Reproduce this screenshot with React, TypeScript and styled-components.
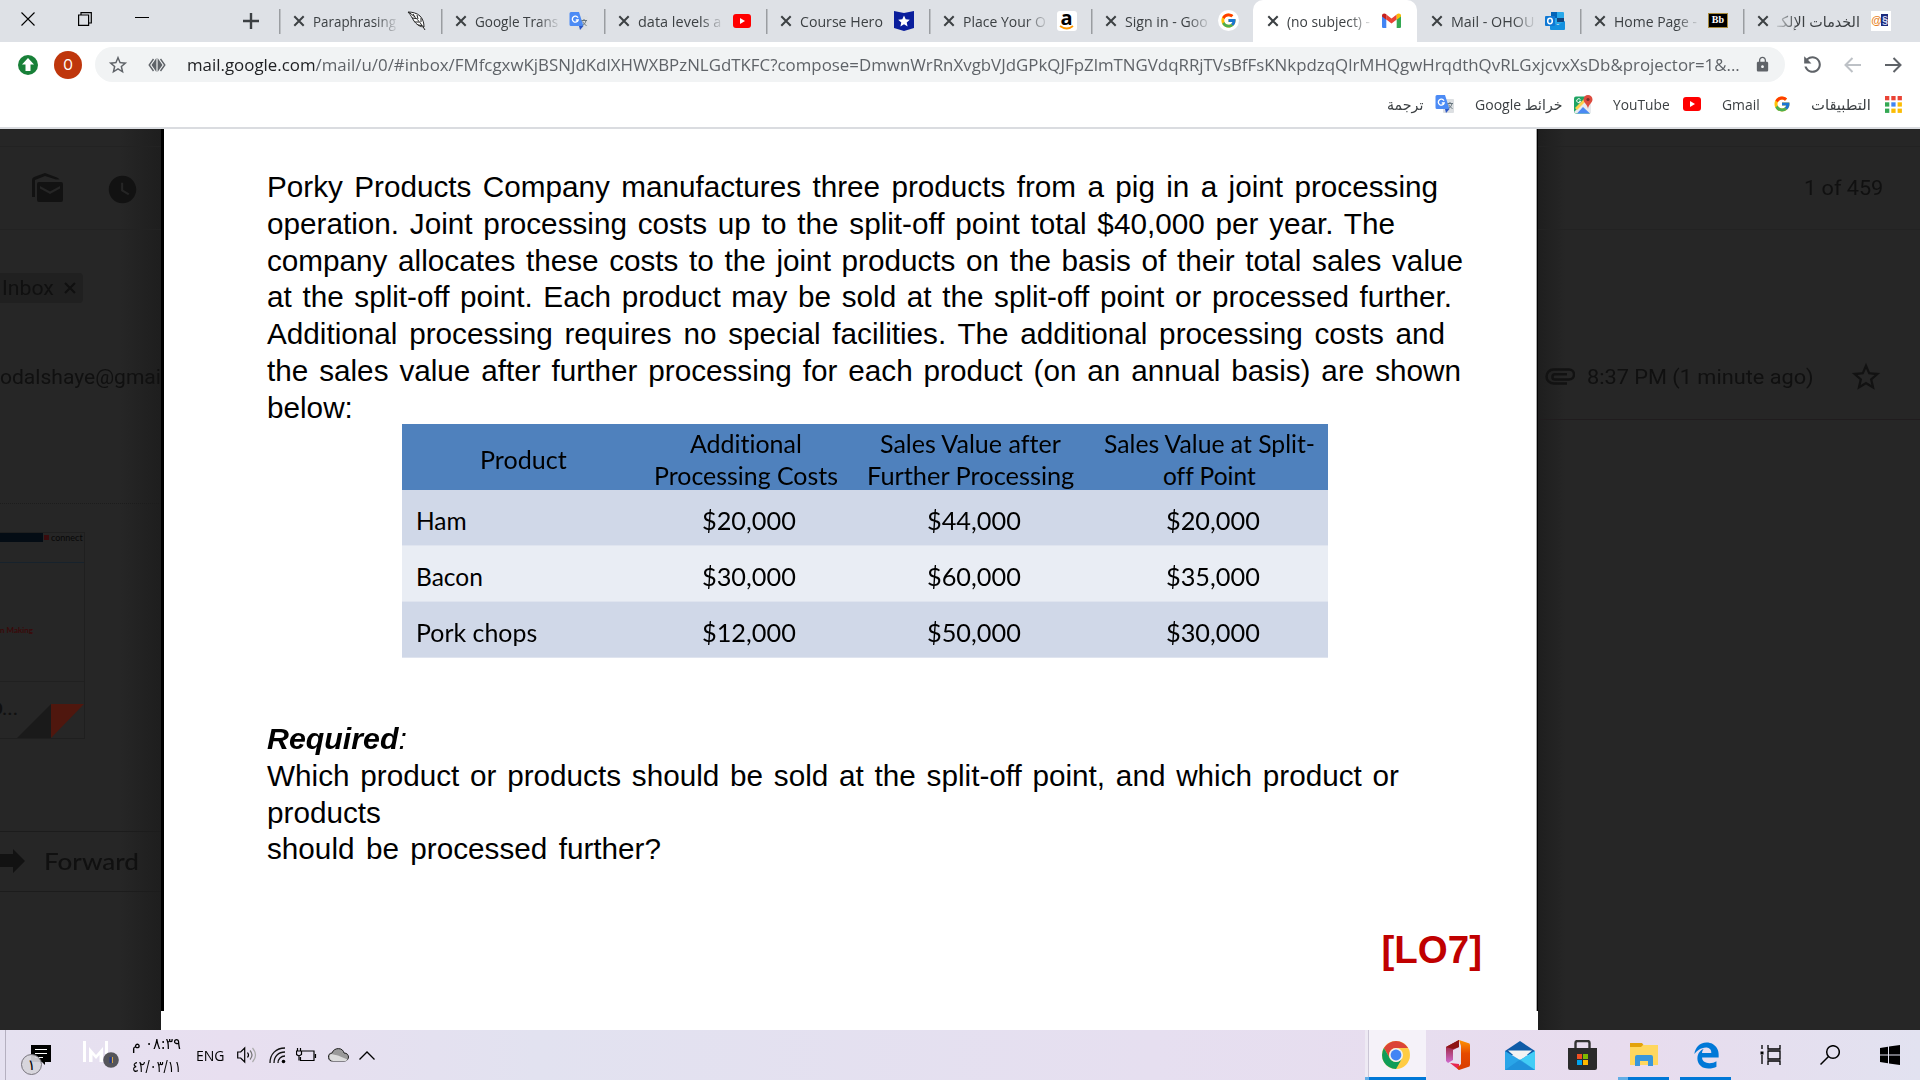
import React, { useLayoutEffect, useRef, useState } from "react";
import styled, { createGlobalStyle } from "styled-components";
import { FaEdgeLegacy } from "react-icons/fa6";
import { FcGoogle } from "react-icons/fc";
import { MdLock, MdRefresh, MdStarBorder, MdWatchLater } from "react-icons/md";

const UI_FONT = `"Open Sans", "Noto Sans", "DejaVu Sans", sans-serif`;
const SLIDE_FONT = `"Liberation Sans", Arial, sans-serif`;
const TABLE_FONT = `Lato, Carlito, sans-serif`;

const GlobalStyle = createGlobalStyle`
  * { box-sizing: border-box; }
  body {
    margin: 0;
    overflow: hidden;
    font-family: ${UI_FONT};
  }
  svg { display: block; flex: none; }
`;

// Squeezes or stretches a single line of text to a known width
const FitText: React.FC<{ width: number; children: React.ReactNode; rtl?: boolean }> = (props) => {
  const { width, children, rtl } = props;
  const ref = useRef<HTMLSpanElement>(null);
  const [scale, setScale] = useState(1);

  useLayoutEffect(() => {
    if (ref.current) setScale(width / ref.current.offsetWidth);
  }, [width]);

  return (
    <FitBox style={{ width }}>
      <FitInner ref={ref} dir={rtl ? "rtl" : "ltr"} style={{ transform: `scaleX(${scale})` }}>
        {children}
      </FitInner>
    </FitBox>
  );
};

// Spreads the slack of a slide line over its word gaps
const SlideLine: React.FC<{ width: number; text: string }> = (props) => {
  const { width, text } = props;
  const ref = useRef<HTMLSpanElement>(null);
  const [spacing, setSpacing] = useState(0);

  useLayoutEffect(() => {
    const gaps = text.split(" ").length - 1;
    if (ref.current && gaps > 0) setSpacing((width - ref.current.getBoundingClientRect().width) / gaps);
  }, [width, text]);

  return (
    <Line>
      <LineText ref={ref} style={{ wordSpacing: spacing }}>
        {text}
      </LineText>
    </Line>
  );
};

/* ---------- icons ---------- */

const CloseIcon = () => (
  <svg width="12" height="12" viewBox="0 0 12 12" stroke="#3c4043" strokeWidth="2">
    <path d="M1.3 1.3 10.7 10.7M10.7 1.3 1.3 10.7" />
  </svg>
);

const FeatherIcon = () => (
  <svg width="20" height="20" viewBox="0 0 20 20" fill="#fff" stroke="#222" strokeWidth="1">
    <path d="M1 1c4 0 9 1 12 4 3 3 4 7 4 11-4 0-8-3-10-6C5 7 4 4 1 1z" />
    <path d="M2 1.500c6 4 11 9 16 17.500M6 3l2 3M10 4l1 4M14 7l0 4M5 7l4 .5M8 11l4 0M11 14l4 .5" />
  </svg>
);

const TranslateIcon = () => (
  <svg width="20" height="20" viewBox="0 0 20 20">
    <rect x="8" y="5" width="11" height="14" rx="1" fill="#dcdfe2" />
    <path d="M2 1h8l4.500 14H2a1.500 1.500 0 0 1-1.500-1.500v-11A1.500 1.500 0 0 1 2 1z" fill="#4c8bf5" />
    <path d="M10 15h4.500L11 19z" fill="#2b56c6" />
    <path d="M9 6.800a3 3 0 1 0 .2 2.200H6.800" fill="none" stroke="#fff" strokeWidth="1.300" />
    <path d="M12.500 9.500h5.500M15 8v1.500M17 9.500c-.5 2.500-2 4-3.500 5M13.700 10.500c.8 2 2 3 3.800 4" fill="none" stroke="#67757d" />
  </svg>
);

const YouTubeIcon = () => (
  <svg width="18" height="14" viewBox="0 0 18 14">
    <rect width="18" height="14" rx="3" fill="#f00" />
    <path d="M7 4l5 3-5 3z" fill="#fff" />
  </svg>
);

const HeroIcon = () => (
  <svg width="20" height="20" viewBox="0 0 20 20">
    <path d="M0 0l10 2 10-2v17l-10 3-10-3z" fill="#0a1e9c" />
    <path d="M10 4.500l1.700 3.800 4.100.4-3.100 2.700.9 4-3.600-2.100-3.600 2.100.9-4-3.100-2.700 4.100-.4z" fill="#fff" />
  </svg>
);

const GmailIcon = () => (
  <svg width="19" height="15" viewBox="0 0 19 15">
    <path d="M0 2v11.700C0 14.500.6 15 1.300 15h3V6z" fill="#4285f4" />
    <path d="M19 2v11.700c0 .8-.6 1.300-1.300 1.300h-3V6z" fill="#34a853" />
    <path d="M4.300 1.500L9.500 5.500l5.200-4v5L9.500 10.500 4.300 6.500z" fill="#ea4335" />
    <path d="M14.700 1.200C16.500-.2 19 .4 19 2.500v1l-4.300 3.200z" fill="#fbbc04" />
    <path d="M4.300 1.200C2.500-.2 0 .4 0 2.500v1l4.300 3.200z" fill="#c5221f" />
  </svg>
);

const OutlookIcon = () => (
  <svg width="20" height="18" viewBox="0 0 20 18">
    <rect x="6" width="13" height="12" rx="1" fill="#28a8ea" />
    <path d="M6 0h6v6H6z" fill="#0364b8" />
    <path d="M12 6h7v4h-7z" fill="#14447d" />
    <path d="M5 9l8 4 7-4v8a1 1 0 0 1-1 1H6a1 1 0 0 1-1-1z" fill="#1490df" />
    <rect y="4" width="10" height="10" rx="1" fill="#0f78d4" />
    <ellipse cx="5" cy="9" rx="2.300" ry="2.700" fill="none" stroke="#fff" strokeWidth="1.500" />
  </svg>
);

const MapsIcon = () => (
  <svg width="19" height="19" viewBox="0 0 19 19">
    <rect y="1.500" width="17" height="17" rx="2" fill="#1fa463" />
    <path d="M0 17L14 3l3 3v12H1z" fill="#e8eaed" />
    <path d="M3 18.500L9 12l7 6.500z" fill="#4a89f3" />
    <path d="M1 13L12 2l2 2L3 15z" fill="#ffd04c" />
    <path d="M14 0a4.500 4.500 0 0 1 4.500 4.500C18.500 8 14.500 9 14 14c-.5-5-4.500-6-4.500-9.500A4.500 4.500 0 0 1 14 0z" fill="#dd4b3e" />
    <circle cx="14" cy="4.500" r="1.600" fill="#7e2f29" />
    <path d="M6.500 4.700a2 2 0 1 0 .2 1.600H5" fill="none" stroke="#fff" />
  </svg>
);

const appDots = ["#ea4335", "#ea4335", "#ea4335", "#34a853", "#4285f4", "#fbbc04", "#34a853", "#fbbc04", "#fbbc04"];

const AppsIcon = () => (
  <svg width="17" height="17" viewBox="0 0 17 17">
    {appDots.map((fill, i) => (
      <rect key={i} x={(i % 3) * 6.3} y={Math.floor(i / 3) * 6.3} width="4.300" height="4.300" fill={fill} />
    ))}
  </svg>
);

const ChromeIcon = () => (
  <svg width="28" height="28" viewBox="0 0 28 28">
    <circle cx="14" cy="14" r="14" fill="#fc4" />
    <path d="M1.900 7A14 14 0 0 1 26.100 7H14a7 7 0 0 0-6 10.500z" fill="#db4437" />
    <path d="M1.900 7A14 14 0 0 0 14 28l6-10.500a7 7 0 0 1-12 0z" fill="#0f9d58" />
    <circle cx="14" cy="14" r="7" fill="#f1f1f1" />
    <circle cx="14" cy="14" r="5.400" fill="#4285f4" />
  </svg>
);

const OfficeIcon = () => (
  <svg width="24" height="30" viewBox="0 0 24 30">
    <defs>
      <linearGradient id="officeEdge" x1="0" y1="0" x2="0" y2="1">
        <stop offset="0" stopColor="#ff9500" />
        <stop offset=".45" stopColor="#e64a00" />
        <stop offset="1" stopColor="#d83b01" />
      </linearGradient>
      <linearGradient id="officeSide" x1="0" y1="0" x2="0" y2="1">
        <stop offset="0" stopColor="#8f1010" />
        <stop offset="1" stopColor="#cf6bd0" />
      </linearGradient>
    </defs>
    <path d="M0 7L13 0v7l-6 3v10l-5 3-2-2z" fill="url(#officeSide)" />
    <path d="M0 7L13 0v7l-6 2z" fill="#8f1313" />
    <path d="M4 23l9 1v6z" fill="#e8264f" />
    <path d="M13 0l9 3a2 2 0 0 1 2 2v20a2 2 0 0 1-2 2l-9 3-2-2 4-4V6z" fill="url(#officeEdge)" />
  </svg>
);

const MailIcon = () => (
  <svg width="30" height="29" viewBox="0 0 30 29">
    <path d="M0 10L15 0l15 10v4H0z" fill="#0f5ba7" />
    <path d="M3 9.500h24L15 20z" fill="#f3f3f3" />
    <path d="M0 10l15 9L30 10v19H0z" fill="#2aa5e8" />
    <path d="M30 10v19L12 17.500l3 1.500z" fill="#42cdf6" />
    <path d="M0 29h30L15 18.500z" fill="#1784d0" opacity=".55" />
  </svg>
);

const StoreIcon = () => (
  <svg width="29" height="30" viewBox="0 0 29 30">
    <path d="M7.500 9V3a2 2 0 0 1 2-2h10a2 2 0 0 1 2 2v6" fill="none" stroke="#333" strokeWidth="2.400" />
    <path d="M0 8h29v20a2 2 0 0 1-2 2H2a2 2 0 0 1-2-2z" fill="#2b2b2b" />
    <path d="M9 14h5v5H9z" fill="#f25022" />
    <path d="M15 14h5v5h-5z" fill="#7fba00" />
    <path d="M9 20h5v5H9z" fill="#00a4ef" />
    <path d="M15 20h5v5h-5z" fill="#ffb900" />
  </svg>
);

const ExplorerIcon = () => (
  <svg width="28" height="24" viewBox="0 0 28 24">
    <path d="M0 0h12l1.500 2H28v4H0z" fill="#e3a30c" />
    <path d="M0 4h11l2-2h15v20H0z" fill="#ffd75e" />
    <path d="M5 23v-9a2 2 0 0 1 2-2h14a2 2 0 0 1 2 2v9h-5v-5h-8v5z" fill="#3a97db" />
  </svg>
);

const TaskViewIcon = () => (
  <svg width="21" height="20" viewBox="0 0 21 20" fill="none" stroke="#000" strokeWidth="1.300">
    <path d="M8 0v4h12V0M8 20v-4h12v4M8 6h12v8H8zM2 0v4M2 10v9" />
    <path d="M.5 6.500h3v3h-3z" fill="#000" stroke="none" />
  </svg>
);

const SearchIcon = () => (
  <svg width="20" height="20" viewBox="0 0 20 20" fill="none" stroke="#000" strokeWidth="1.500">
    <circle cx="13" cy="7" r="6.300" />
    <path d="M8.500 11.500L.5 19.500" />
  </svg>
);

const WindowsIcon = () => (
  <svg width="20" height="20" viewBox="0 0 20 20">
    <path d="M0 3l8-1.200v7.700H0zM9 1.600L20 0v9.500H9zM0 10.500h8v7.700L0 17zM9 10.500h11V20L9 18.400z" />
  </svg>
);

const SpeakerIcon = () => (
  <svg width="21" height="18" viewBox="0 0 21 18" fill="none" stroke="#000" strokeWidth="1.200">
    <path d="M.7 6h3l4-4v14l-4-4h-3zM10.500 6.500q2 2.500 0 5" />
    <path d="M13 4.500q4 4.500 0 9" stroke="#777" />
    <path d="M15.500 2q6 7 0 14" stroke="#aaa" />
  </svg>
);

const WifiIcon = () => (
  <svg width="17" height="17" viewBox="0 0 17 17" fill="none" stroke="#111" strokeWidth="1.300">
    <path d="M1 16C1 7 7 1 16 1M5 16C5 9.500 9.500 5 16 5M9 16c0-4 3-7 7-7" />
    <circle cx="14.500" cy="14.500" r="1.800" fill="#000" stroke="none" />
  </svg>
);

const BatteryIcon = () => (
  <svg width="21" height="15" viewBox="0 0 21 15" fill="none" stroke="#000" strokeWidth="1.200">
    <path d="M6 3h12v9.500H4.500V9M19.500 6v4M1.500 0v3M4.500 0v3M.5 3h5v3.500L3 8 .5 6.500zM3 8v4.500" />
  </svg>
);

const CloudIcon = () => (
  <svg width="21" height="14" viewBox="0 0 21 14" stroke="#222" strokeWidth="1">
    <path d="M5 13a4 4 0 0 1-1-8C5 2 8 .5 10.500.6c3 0 5 2 5.500 4.400 3 0 4.500 2 4.500 4S19 13 16.500 13z" fill="#9a9a9a" />
    <path d="M5 13a4 4 0 0 1-2-7l7 1.500 9.500 4c-.7 1-1.500 1.500-3 1.500z" fill="#dcdcdc" stroke="none" />
  </svg>
);

const MeetIcon = () => (
  <svg width="36" height="28" viewBox="0 0 36 28">
    <path d="M0 0h3v21H0zM6 21V6l7 8 7-8v15h-3.500v-7L13 18l-3.500-4v7zM22 0h3v14h-3z" fill="#fff" />
    <circle cx="28" cy="19" r="7.800" fill="#55555a" />
    <path d="M27.500 16v6" stroke="#223a8c" strokeWidth="2" />
    <path d="M29.500 16v6" stroke="#d9a441" />
  </svg>
);

const NotificationIcon = () => (
  <svg width="20" height="20" viewBox="0 0 20 20">
    <path d="M0 0h20v17h-6v3l-3-3H0z" />
    <path d="M4 4.500h12M4 8.500h12M4 12.500h8" stroke="#fff" />
  </svg>
);

const MoveToIcon = () => (
  <svg width="32" height="30" viewBox="0 0 32 30" fill="#121212">
    <path d="M0 24V7q0-2 2-3l11-4 12 4.500q2 1 2.500 2H24L13 3 3 7v17z" />
    <path d="M7 9h22q2 0 2 2v16q0 2-2 2H7q-2 0-2-2V11q0-2 2-2zm1 4v2.500l10 5.500 10-5.500V13l-10 5.500z" />
  </svg>
);

const ClipIcon = () => (
  <svg width="31" height="18" viewBox="0 0 31 18" fill="none" stroke="#121212" strokeWidth="2.500">
    <path d="M23 15.500H9.500a7 7 0 0 1 0-14H25a4.500 4.500 0 0 1 0 10H11a2.600 2.600 0 0 1 0-5.200h12" />
  </svg>
);

/* ---------- data ---------- */

interface TabData {
  title: string;
  icon: React.ReactNode;
  active?: boolean;
  rtl?: boolean;
}

const tabs: TabData[] = [
  { title: "Paraphrasing", icon: <FeatherIcon /> },
  { title: "Google Trans", icon: <TranslateIcon /> },
  { title: "data levels a", icon: <YouTubeIcon /> },
  { title: "Course Hero", icon: <HeroIcon /> },
  { title: "Place Your O", icon: "amazon" },
  { title: "Sign in - Goo", icon: "google" },
  { title: "(no subject) -", icon: <GmailIcon />, active: true },
  { title: "Mail - OHOU", icon: <OutlookIcon /> },
  { title: "Home Page -", icon: "blackboard" },
  { title: "الخدمات الإلكـ", icon: "services", rtl: true },
];

const bookmarks = [
  { label: "ترجمة", width: 36, icon: <TranslateIcon />, rtl: true },
  { label: "خرائط Google", width: 87, icon: <MapsIcon />, rtl: true },
  { label: "YouTube", width: 57, icon: <YouTubeIcon /> },
  { label: "Gmail", width: 38, icon: <FcGoogle size={18} /> },
  { label: "التطبيقات", width: 60, icon: <AppsIcon />, rtl: true },
];

const introLines = [
  { width: 1171, text: "Porky Products Company manufactures three products from a pig in a joint processing" },
  { width: 1128, text: "operation. Joint processing costs up to the split-off point total $40,000 per year. The" },
  { width: 1196, text: "company allocates these costs to the joint products on the basis of their total sales value" },
  { width: 1185, text: "at the split-off point. Each product may be sold at the split-off point or processed further." },
  { width: 1178, text: "Additional processing requires no special facilities. The additional processing costs and" },
  { width: 1194, text: "the sales value after further processing for each product (on an annual basis) are shown" },
  { width: 84, text: "below:" },
];

const questionLines = [
  { width: 1132, text: "Which product or products should be sold at the split-off point, and which product or" },
  { width: 114, text: "products" },
  { width: 394, text: "should be processed further?" },
];

const headers = [
  [{ text: "Product", width: 87 }],
  [{ text: "Additional", width: 112 }, { text: "Processing Costs", width: 184 }],
  [{ text: "Sales Value after", width: 181 }, { text: "Further Processing", width: 207 }],
  [{ text: "Sales Value at Split-", width: 211 }, { text: "off Point", width: 93 }],
];

const products = [
  { name: "Ham", width: 51, values: ["$20,000", "$44,000", "$20,000"] },
  { name: "Bacon", width: 67, values: ["$30,000", "$60,000", "$35,000"] },
  { name: "Pork chops", width: 121, values: ["$12,000", "$50,000", "$30,000"] },
];

const renderFavicon = (icon: React.ReactNode) => {
  if (icon === "amazon") {
    return (
      <LetterIcon>
        a
        <svg width="16" height="5" viewBox="0 0 16 5" fill="none" stroke="#f90" strokeWidth="1.800">
          <path d="M1 1q7 5 13 0" />
        </svg>
      </LetterIcon>
    );
  }
  if (icon === "google") {
    return (
      <RoundIcon>
        <FcGoogle size={17} />
      </RoundIcon>
    );
  }
  if (icon === "blackboard") return <BoardIcon>Bb</BoardIcon>;
  if (icon === "services") {
    return (
      <ServiceIcon>
        @<span>§</span>
      </ServiceIcon>
    );
  }
  return icon;
};

/* ---------- page ---------- */

const App: React.FC = () => (
  <Screen>
    <GlobalStyle />
    <TabStrip>
      <WindowControls>
        <svg width="14" height="14" viewBox="0 0 14 14" stroke="#000" strokeWidth="1.100">
          <path d="M.5.5l13 13M13.500.5L.5 13.500" />
        </svg>
        <svg width="14" height="14" viewBox="0 0 14 14" fill="none" stroke="#000" strokeWidth="1.200">
          <path d="M.6 3h10v10.400H.6zM3 3V.7h10.300V11h-2.500" />
        </svg>
        <svg width="14" height="14" viewBox="0 0 14 14" stroke="#000">
          <path d="M0 5.500h14" />
        </svg>
      </WindowControls>
      <NewTab>
        <svg width="16" height="16" viewBox="0 0 16 16" stroke="#3c4043" strokeWidth="2.400">
          <path d="M8 0v16M0 8h16" />
        </svg>
      </NewTab>
      {tabs.map((tab, index) => (
        <Tab
          key={tab.title}
          $width={index < 6 ? 162.4 : 163.3}
          $active={tab.active}
          $divider={!tab.active && !tabs[index - 1]?.active}
        >
          <CloseIcon />
          <TabTitle $rtl={tab.rtl} $full={tab.title === "Course Hero"}>
            <FitText width={83} rtl={tab.rtl}>
              {tab.title}
            </FitText>
          </TabTitle>
          <Favicon>{renderFavicon(tab.icon)}</Favicon>
        </Tab>
      ))}
    </TabStrip>

    <Toolbar>
      <UpdateBadge>
        <svg width="12" height="13" viewBox="0 0 12 13" fill="#fff">
          <path d="M6 0l6 6.500H8.500V13h-5V6.500H0z" />
        </svg>
      </UpdateBadge>
      <Avatar>O</Avatar>
      <Omnibox>
        <MdStarBorder size={22} color="#5f6368" />
        <svg width="18" height="14" viewBox="0 0 18 14">
          <path d="M5.500 1L1.200 7l4.300 6M12.500 1l4.300 6-4.300 6" fill="none" stroke="#5f6368" strokeWidth="1.400" />
          <path d="M8.400 0v14L3.500 7zM9.600 0v14l4.900-7z" fill="#5f6368" />
        </svg>
        <Url>
          <FitText width={1553}>
            <b>mail.google.com</b>
            /mail/u/0/#inbox/FMfcgxwKjBSNJdKdlXHWXBPzNLGdTKFC?compose=DmwnWrRnXvgbVJdGPkQJFpZlmTNGVdqRRjTVsBfFsKNkpdzqQlrMHQgwHrqdthQvRLGxjcvxXsDb&amp;projector=1&amp;...
          </FitText>
        </Url>
        <MdLock size={17} color="#5f6368" />
      </Omnibox>
      <NavButtons>
        <Flipped>
          <MdRefresh size={25} color="#5f6368" />
        </Flipped>
        <svg width="17" height="16" viewBox="0 0 17 16" fill="none" stroke="#bdc1c6" strokeWidth="2">
          <path d="M17 8H2M8.500 1L1.500 8l7 7" />
        </svg>
        <svg width="17" height="16" viewBox="0 0 17 16" fill="none" stroke="#5f6368" strokeWidth="2">
          <path d="M0 8h15M8.500 1l7 7-7 7" />
        </svg>
      </NavButtons>
    </Toolbar>

    <BookmarkBar>
      {bookmarks.map((bookmark) => (
        <Bookmark key={bookmark.label}>
          <FitText width={bookmark.width} rtl={bookmark.rtl}>
            {bookmark.label}
          </FitText>
          <BookmarkIcon>{bookmark.icon}</BookmarkIcon>
        </Bookmark>
      ))}
    </BookmarkBar>

    <Viewport>
      <LeftPane>
        <MailTools>
          <MoveToIcon />
          <MdWatchLater size={33} color="#121212" />
        </MailTools>
        <LabelRow>
          <Chip>
            <FitText width={52}>Inbox</FitText>
            <svg width="12" height="12" viewBox="0 0 12 12" stroke="#101010" strokeWidth="2">
              <path d="M1 1l10 10M11 1L1 11" />
            </svg>
          </Chip>
        </LabelRow>
        <Sender>
          <FitText width={161}>odalshaye@gmai</FitText>
        </Sender>
        <Attachment>
          <PreviewHeader>
            <i />
            <em />
            <FitText width={32}>connect</FitText>
          </PreviewHeader>
          <PreviewBody>
            <FitText width={33}>n Making</FitText>
          </PreviewBody>
          <PreviewFooter>
            <FileName>O...</FileName>
            <svg width="67" height="34" viewBox="0 0 67 34">
              <path d="M0 34L34 0v34z" fill="#1a1a1a" />
              <path d="M34 0h33L34 34z" fill="#4f170e" />
            </svg>
          </PreviewFooter>
        </Attachment>
        <ForwardButton>
          <svg width="25" height="24" viewBox="0 0 25 24" fill="#121212">
            <path d="M0 5h13V0l12 12-12 12v-6H0z" />
          </svg>
          <FitText width={95}>Forward</FitText>
        </ForwardButton>
      </LeftPane>

      <SlideColumn>
        <Slide>
          <Intro>
            {introLines.map((line) => (
              <SlideLine key={line.text} {...line} />
            ))}
          </Intro>
          <Table>
            {headers.map((lines) => (
              <HeaderCell key={lines[0].text}>
                {lines.map((line) => (
                  <FitText key={line.text} width={line.width}>
                    {line.text}
                  </FitText>
                ))}
              </HeaderCell>
            ))}
            {products.map((product, index) => (
              <React.Fragment key={product.name}>
                <NameCell $light={index === 1}>
                  <FitText width={product.width}>{product.name}</FitText>
                </NameCell>
                {product.values.map((value, column) => (
                  <ValueCell key={column} $light={index === 1}>
                    <FitText width={94}>{value}</FitText>
                  </ValueCell>
                ))}
              </React.Fragment>
            ))}
          </Table>
          <Question>
            <Required>
              <FitText width={140}>
                <strong>Required</strong>:
              </FitText>
            </Required>
            {questionLines.map((line) => (
              <SlideLine key={line.text} {...line} />
            ))}
          </Question>
          <Objective>[LO7]</Objective>
        </Slide>
      </SlideColumn>

      <RightPane>
        <Counter>
          <FitText width={79}>1 of 459</FitText>
        </Counter>
        <Received>
          <ClipIcon />
          <FitText width={227}>8:37 PM (1 minute ago)</FitText>
          <MdStarBorder size={34} color="#121212" />
        </Received>
      </RightPane>
    </Viewport>

    <Taskbar>
      <ShowDesktop />
      <Notifications>
        <NotificationIcon />
        <NotificationCount>١</NotificationCount>
      </Notifications>
      <MeetIcon />
      <Clock>
        <FitText width={49} rtl>
          ٠٨:٣٩ م
        </FitText>
        <FitText width={49}>٤٢/٠٣/١١</FitText>
      </Clock>
      <Language>
        <FitText width={29}>ENG</FitText>
      </Language>
      <Tray>
        <SpeakerIcon />
        <WifiIcon />
        <BatteryIcon />
        <CloudIcon />
        <svg width="16" height="9" viewBox="0 0 16 9" fill="none" stroke="#000" strokeWidth="1.300">
          <path d="M.5 8.500L8 1l7.500 7.500" />
        </svg>
      </Tray>
      <Apps>
        <AppButton $state="active">
          <ChromeIcon />
        </AppButton>
        <AppButton>
          <OfficeIcon />
        </AppButton>
        <AppButton>
          <MailIcon />
        </AppButton>
        <AppButton>
          <StoreIcon />
        </AppButton>
        <AppButton $state="stacked">
          <ExplorerIcon />
        </AppButton>
        <AppButton $state="open">
          <FaEdgeLegacy size={27} color="#0078d7" />
        </AppButton>
        <SystemButton>
          <TaskViewIcon />
        </SystemButton>
        <SystemButton>
          <SearchIcon />
        </SystemButton>
        <SystemButton>
          <WindowsIcon />
        </SystemButton>
      </Apps>
    </Taskbar>
  </Screen>
);
export default App;

const Screen = styled.div`
  display: flex;
  flex-direction: column;
  width: 1920px;
  height: 1080px;
  overflow: hidden;
  background: #fff;
`;

const FitBox = styled.span`
  display: block;
  flex: none;
  white-space: nowrap;
`;
const FitInner = styled.span`
  display: inline-block;
  white-space: nowrap;
  transform-origin: 0 50%;
`;

/* browser chrome */

const TabStrip = styled.div`
  display: flex;
  height: 42px;
  flex: none;
  background: #dee1e6;
`;
const WindowControls = styled.div`
  display: flex;
  gap: 43px;
  width: 227px;
  padding: 12px 0 0 21px;
`;
const NewTab = styled.div`
  width: 52px;
  padding: 13px 0 0 16px;
`;
const Tab = styled.div<{ $width: number; $active?: boolean; $divider?: boolean }>`
  display: flex;
  align-items: center;
  flex: none;
  width: ${(p) => p.$width}px;
  height: 42px;
  padding: 0 0 1px 14px;
  border-radius: ${(p) => (p.$active ? "10px 10px 0 0" : "0")};
  background: ${(p) =>
    p.$active
      ? "#fff"
      : p.$divider
        ? "linear-gradient(#9a9da1, #9a9da1) 0 9px / 1.500px 25px no-repeat"
        : "none"};
`;
const TabTitle = styled.div<{ $rtl?: boolean; $full?: boolean }>`
  width: 83px;
  margin-left: 8px;
  overflow: hidden;
  font-size: 15px;
  line-height: 24px;
  color: #3c4043;
  mask-image: ${(p) =>
    p.$full ? "none" : `linear-gradient(to ${p.$rtl ? "left" : "right"}, #000 75%, rgba(0, 0, 0, 0.15))`};
`;
const Favicon = styled.div`
  display: flex;
  align-items: center;
  justify-content: center;
  width: 22px;
  margin-left: 10px;
`;
const LetterIcon = styled.div`
  width: 20px;
  height: 20px;
  padding: 0 2px;
  border-radius: 3px;
  background: #fff;
  font: bold 20px/14px "Open Sans", sans-serif;
  text-align: center;
`;
const RoundIcon = styled.div`
  padding: 2px;
  border-radius: 50%;
  background: #fff;
`;
const BoardIcon = styled.div`
  width: 20px;
  height: 15px;
  border: 1.5px solid #a98b3a;
  background: #000;
  color: #fff;
  font: bold 10px/11px "Liberation Serif", serif;
  text-align: center;
`;
const ServiceIcon = styled.div`
  width: 20px;
  height: 20px;
  background: #fff;
  color: #e8821e;
  font: bold 11px/18px "Liberation Sans", sans-serif;
  letter-spacing: -1px;

  span {
    padding: 0 1px;
    background: #1c2b7c;
    color: #d7dcf5;
  }
`;

const Toolbar = styled.div`
  display: flex;
  align-items: center;
  flex: none;
  height: 45px;
  padding-left: 18px;
`;
const UpdateBadge = styled.div`
  display: flex;
  align-items: center;
  justify-content: center;
  width: 20px;
  height: 20px;
  border-radius: 50%;
  background: #188038;
`;
const Avatar = styled.div`
  width: 28px;
  height: 28px;
  margin-left: 16px;
  border-radius: 50%;
  background: #bf360c;
  color: #fff;
  font: 14px/28px Roboto, sans-serif;
  text-align: center;
`;
const Omnibox = styled.div`
  display: flex;
  align-items: center;
  width: 1690px;
  height: 35px;
  margin-left: 13px;
  padding-left: 12px;
  border-radius: 18px;
  background: #f1f3f4;

  > svg + svg {
    margin-left: 19px;
  }
`;
const Url = styled.div`
  width: 1553px;
  margin: 0 14px 0 21px;
  font-size: 17px;
  line-height: 24px;
  color: #5f6368;

  b {
    font-weight: 400;
    color: #202124;
  }
`;
const NavButtons = styled.div`
  display: flex;
  align-items: center;
  margin-left: 15px;
  gap: 24px;

  > svg:first-of-type {
    margin-left: -5px;
  }
`;
const Flipped = styled.span`
  transform: scaleX(-1);
`;

const BookmarkBar = styled.div`
  display: flex;
  align-items: center;
  justify-content: flex-end;
  gap: 19.5px;
  flex: none;
  height: 42px;
  padding: 0 17px 6px 0;
  border-bottom: 2px solid #dadce0;
`;
const Bookmark = styled.div`
  display: flex;
  align-items: center;
  gap: 12px;
  font-size: 15px;
  line-height: 24px;
  color: #3c4043;
`;
const BookmarkIcon = styled.span`
  display: flex;
  justify-content: center;
  width: 20px;
`;

/* dimmed mail page */

const Viewport = styled.div`
  display: flex;
  flex: none;
  height: 901px;
  background: #262626;
`;
const LeftPane = styled.div`
  flex: none;
  width: 161px;
  overflow: hidden;
  background: linear-gradient(to right, transparent 120px, #1e1e1e);
  color: #101010;
  font-family: Roboto, sans-serif;
`;
const MailTools = styled.div`
  display: flex;
  gap: 42px;
  height: 84px;
  margin-top: 17px;
  padding: 26px 0 0 32px;
  border-top: 1px solid #222;
  border-bottom: 1px solid #222;
`;
const LabelRow = styled.div`
  padding-top: 43px;
  height: 112px;
`;
const Chip = styled.div`
  display: flex;
  align-items: center;
  gap: 10px;
  width: 83px;
  height: 30px;
  padding-left: 2px;
  border-radius: 0 4px 4px 0;
  background: #202020;
  font-size: 20px;
`;
const Sender = styled.div`
  height: 162px;
  padding-top: 21px;
  border-bottom: 1px dotted #1c1c1c;
  font-size: 20px;
  line-height: 28px;
`;
const Attachment = styled.div`
  width: 85px;
  height: 207px;
  margin-top: 28px;
  border: solid #1f1f1f;
  border-width: 1px 1px 1px 0;
`;
const PreviewHeader = styled.div`
  display: flex;
  align-items: center;
  height: 30px;
  padding-bottom: 20px;
  border-bottom: 1px solid #17222c;
  color: #080808;
  font: 9px/10px ${TABLE_FONT};

  i {
    width: 43px;
    height: 9px;
    background: #040c14;
  }
  em {
    width: 5px;
    height: 5px;
    margin: 0 2px 0 1px;
    background: #3a0b0d;
  }
`;
const PreviewBody = styled.div`
  height: 119px;
  padding-top: 61px;
  border-bottom: 1px solid #202020;
  color: #3a0909;
  font: bold 8px/12px ${TABLE_FONT};
`;
const PreviewFooter = styled.div`
  display: flex;
  align-items: flex-end;
  height: 56px;
`;
const FileName = styled.span`
  width: 17px;
  padding-bottom: 18px;
  font: 500 19px/22px Roboto, sans-serif;
  text-indent: -10px;
`;
const ForwardButton = styled.div`
  display: flex;
  align-items: center;
  gap: 19px;
  height: 61px;
  margin-top: 92px;
  padding-bottom: 2px;
  border-top: 1px solid #1c1c1c;
  border-bottom: 1px solid #1c1c1c;
  font: 500 23px/30px ${TABLE_FONT};
`;

const RightPane = styled.div`
  flex: 1;
  background: linear-gradient(to left, transparent calc(100% - 28px), #1e1e1e);
  color: #101010;
  font: 20px/28px Roboto, sans-serif;
`;
const Counter = styled.div`
  display: flex;
  justify-content: flex-end;
  height: 84px;
  margin-top: 17px;
  padding: 27px 37px 0 0;
  border-top: 1px solid #222;
  border-bottom: 1px solid #222;
`;
const Received = styled.div`
  display: flex;
  align-items: center;
  height: 190px;
  padding: 105px 0 0 6px;
  border-bottom: 1px solid #201c1e;

  > span {
    margin: 0 35px 0 12px;
  }
`;

/* slide */

const SlideColumn = styled.div`
  flex: none;
  width: 1377px;
  background: #fff;
`;
const Slide = styled.div`
  display: flex;
  flex-direction: column;
  height: 882px;
  padding: 40px 55px 0 103px;
  border-left: 3px solid #000;
  border-right: 1px solid #000;
  box-shadow: inset -1px 0 #aaa;
  color: #000;
  font: 29.7px/36.8px ${SLIDE_FONT};
`;
const Line = styled.div`
  height: 36.8px;
`;
const LineText = styled.span`
  white-space: nowrap;
`;
const Intro = styled.div`
  height: 255px;
`;
const Table = styled.div`
  display: grid;
  grid-template-columns: 243px 202px 247px 234px;
  grid-template-rows: 66px repeat(3, 56px);
  flex: none;
  width: 926px;
  margin-left: 135px;
  font: 24.5px/31.5px ${TABLE_FONT};
  font-variant-ligatures: none;
`;
const HeaderCell = styled.div`
  display: flex;
  flex-direction: column;
  align-items: center;
  justify-content: center;
  padding-top: 5px;
  background: #4f81bd;

  &:nth-child(4) {
    padding-right: 3px;
  }
`;
const ValueCell = styled.div<{ $light?: boolean }>`
  display: flex;
  align-items: center;
  justify-content: center;
  padding: 7px 0 0 6px;
  border-bottom: 1px solid #dfe4ef;
  background: ${(p) => (p.$light ? "#e9edf4" : "#d0d8e8")};

  &:nth-child(4n) {
    padding-left: 3px;
  }
`;
const NameCell = styled(ValueCell)`
  justify-content: flex-start;
  padding-left: 14px;
`;
const Question = styled.div`
  margin-top: 63px;
`;
const Required = styled.div`
  height: 36.8px;
  font-style: italic;
`;
const Objective = styled.div`
  align-self: flex-end;
  margin-top: 60px;
  color: #c00000;
  font-size: 38.5px;
  font-weight: bold;
  line-height: 44px;
`;

/* taskbar */

const Taskbar = styled.div`
  display: flex;
  align-items: center;
  flex: none;
  height: 50px;
  background: linear-gradient(to right, #e5e1f0, #e8dff0 12%, #e2e2f0 28%, #e6dff0 60%, #e8dcee 85%, #e2e2f0);
`;
const ShowDesktop = styled.div`
  width: 6px;
  height: 50px;
  border-right: 1px solid #b5b0c0;
`;
const Notifications = styled.div`
  position: relative;
  margin: 0 32px 0 25px;
`;
const NotificationCount = styled.div`
  position: absolute;
  left: -10px;
  top: 9px;
  width: 21px;
  height: 21px;
  border: 1.5px solid #77747c;
  border-radius: 50%;
  background: rgba(214, 212, 218, 0.92);
  font-size: 15px;
  line-height: 18px;
  text-align: center;
`;
const Clock = styled.div`
  display: flex;
  flex-direction: column;
  margin-left: 13px;
  font: 16px/23px "DejaVu Sans", sans-serif;
`;
const Language = styled.div`
  margin-left: 15px;
  font-size: 15px;
`;
const Tray = styled.div`
  display: flex;
  align-items: center;
  gap: 10.5px;
  margin-left: 12px;
`;
const Apps = styled.div`
  display: flex;
  height: 50px;
  margin-left: auto;
`;
const underlines = {
  active:
    "linear-gradient(to right, #62aee6 4px, #0078d7 4px) 0 100% / 61px 3px no-repeat, linear-gradient(to right, #eeeaf4 3px, #cbc6d6 3px, #cbc6d6 4px, #f5f2f9 4px) 0 0 / 61px 50px no-repeat",
  stacked: "linear-gradient(to right, #62aee6 10px, #0078d7 10px) 5px 100% / 51px 3px no-repeat",
  open: "linear-gradient(#0078d7, #0078d7) 5px 100% / 51px 3px no-repeat",
};
const AppButton = styled.div<{ $state?: keyof typeof underlines }>`
  display: flex;
  align-items: center;
  justify-content: center;
  width: 62px;
  background: ${(p) => (p.$state ? underlines[p.$state] : "none")};

  &:nth-child(6) {
    margin-right: 3px;
  }
`;
const SystemButton = styled.div`
  display: flex;
  align-items: center;
  justify-content: center;
  width: 60px;
`;
